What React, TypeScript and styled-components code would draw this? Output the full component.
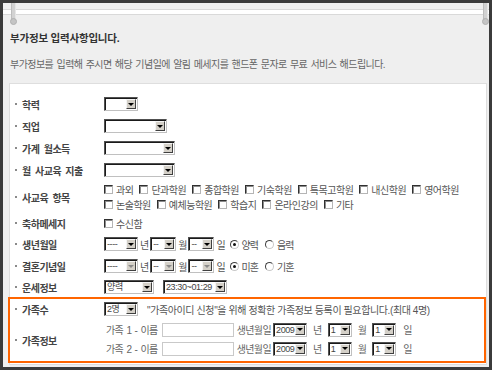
import React from 'react';
import styled, {createGlobalStyle} from 'styled-components';

const GlobalStyle = createGlobalStyle`
  html, body {
    margin: 0;
    padding: 0;
    background: #3b3b3b;
  }
  body {
    font-family: 'Liberation Sans', 'Noto Sans CJK KR', sans-serif;
  }
`;

const Frame = styled.div`
  width: 492px;
  height: 370px;
  box-sizing: border-box;
  padding: 3px;
  background: #3b3b3b;
`;

const Sheet = styled.div`
  position: relative;
  height: 100%;
  display: flex;
  flex-direction: column;
  background: #efefef;
`;

const TopStrip = styled.div`
  margin-top: 6px;
  height: 4px;
  background: #fff;
  border-top: 1px solid #d9d9d9;
  border-bottom: 1px solid #d9d9d9;
`;

const Pin = styled.span<{$left: number}>`
  position: absolute;
  top: 0;
  left: ${(p) => p.$left}px;
  width: 3px;
  height: 19px;
  background: #d2d2d2;
  border-left: 1px solid #bdbdbd;
  border-right: 1px solid #e6e6e6;

  &::after {
    content: '';
    position: absolute;
    left: -2px;
    bottom: -3px;
    width: 5px;
    height: 5px;
    border-radius: 50%;
    background: #c4c4c4;
    border: 1px solid #b0b0b0;
  }
`;

const Title = styled.div`
  margin: 17px 0 0 7px;
  font-size: 10.5px;
  line-height: 12px;
  font-weight: bold;
  letter-spacing: -0.2px;
  color: #333;
`;

const Description = styled.div`
  margin: 15px 0 0 7px;
  font-size: 10px;
  line-height: 12px;
  letter-spacing: -0.55px;
  word-spacing: 1px;
  color: #666;
`;

const Panel = styled.div`
  margin: 12px 2px 0 6px;
  padding-top: 9px;
  background: #fff;
  border: 1px solid #dedede;
`;

const Row = styled.div<{$h: number}>`
  display: flex;
  align-items: center;
  height: ${(p) => p.$h}px;
`;

const Label = styled.div`
  display: flex;
  align-items: center;
  flex: none;
  box-sizing: border-box;
  width: 94px;
  padding-left: 5px;
  font-size: 10px;
  font-weight: bold;
  letter-spacing: -0.5px;
  word-spacing: 2px;
  color: #444;

  &::before {
    content: '';
    width: 2px;
    height: 2px;
    margin-right: 5px;
    background: #8a8a8a;
  }
`;

const Fields = styled.div<{$gap?: number}>`
  display: flex;
  align-items: center;
  gap: ${(p) => p.$gap ?? 2}px;
  font-size: 10px;
  letter-spacing: -1px;
  color: #555;
`;

const Stack = styled.div`
  display: flex;
  flex-direction: column;
`;

const CheckLine = styled.div`
  display: flex;
  align-items: center;
  height: 15px;
  font-size: 10px;
  letter-spacing: -0.5px;
  color: #555;
`;

const CheckItem = styled.span`
  display: inline-flex;
  align-items: center;
  gap: 3px;
  margin-right: 6px;
  white-space: nowrap;
`;

const CheckBox = styled.span`
  flex: none;
  box-sizing: border-box;
  width: 9px;
  height: 9px;
  background: #fff;
  border: 1px solid #b5b5b5;
  border-top-color: #303030;
  border-left-color: #303030;
  box-shadow: inset 1px 1px 0 #8c8c8c;
`;

const RadioItem = styled.span`
  display: inline-flex;
  align-items: center;
  gap: 3px;
  margin-left: 3px;
  margin-right: 2px;
`;

const RadioDot = styled.span<{$on?: boolean}>`
  flex: none;
  box-sizing: border-box;
  width: 9px;
  height: 9px;
  border-radius: 50%;
  border: 1px solid #c8c8c8;
  border-top-color: #404040;
  border-left-color: #404040;
  background: #fff;
  display: flex;
  align-items: center;
  justify-content: center;

  &::after {
    content: '';
    width: 3px;
    height: 3px;
    border-radius: 50%;
    background: ${(p) => (p.$on ? '#111' : 'transparent')};
  }
`;

const SelectBox = styled.span<{$w: number}>`
  flex: none;
  display: inline-flex;
  align-items: stretch;
  box-sizing: border-box;
  width: ${(p) => p.$w}px;
  height: 14px;
  background: #fff;
  border: 1px solid #c0c0c0;
  border-top-color: #505050;
  border-left-color: #505050;
  box-shadow: inset 1px 1px 0 #1a1a1a;
`;

const SelectText = styled.span`
  flex: 1;
  min-width: 0;
  padding: 0 0 0 2px;
  overflow: hidden;
  font-family: 'Liberation Sans', 'Noto Sans CJK KR', sans-serif;
  font-size: 9px;
  line-height: 12px;
  letter-spacing: -0.4px;
  color: #444;
  white-space: nowrap;
`;

const SelectButton = styled.span<{$off?: boolean}>`
  flex: none;
  box-sizing: border-box;
  width: 10px;
  margin: 1px 1px 1px 0;
  background: #d4d0c8;
  border: 1px solid #404040;
  border-top-color: #f4f4f4;
  border-left-color: #f4f4f4;
  display: flex;
  align-items: center;
  justify-content: center;

  &::after {
    content: '';
    border-left: 3px solid transparent;
    border-right: 3px solid transparent;
    border-top: 3px solid ${(p) => (p.$off ? '#8a8a8a' : '#000')};
  }
`;

const Unit = styled.span<{$m?: number}>`
  margin: 0 ${(p) => p.$m ?? 0}px;
`;

const Notice = styled.span`
  margin-left: 7px;
  letter-spacing: -0.4px;
  color: #555;
  white-space: nowrap;
`;

const OrangeBox = styled.div`
  margin: 0 0 1px -2px;
  border: 2px solid #ff6500;
`;

const FamilyLines = styled.div`
  display: flex;
  flex-direction: column;
  padding: 1px 0 3px;
`;

const FamilyLine = styled.div`
  display: flex;
  align-items: center;
  height: 19px;
  padding-left: 2px;
  font-size: 10px;
  letter-spacing: -0.6px;
  word-spacing: 1px;
  color: #666;
  white-space: pre;
`;

const NameInput = styled.span`
  flex: none;
  box-sizing: border-box;
  width: 72px;
  height: 14px;
  margin: 0 3px 0 4px;
  background: #fff;
  border: 1px solid #c9c9c9;
`;

const BirthLabel = styled.span`
  margin-right: 2px;
`;

const Select = ({w, text, off}: {w: number; text: string; off?: boolean}) => (
  <SelectBox $w={w}>
    <SelectText>{text}</SelectText>
    <SelectButton $off={off} />
  </SelectBox>
);

const Check = ({label}: {label: string}) => (
  <CheckItem>
    <CheckBox />
    {label}
  </CheckItem>
);

const Radio = ({label, on}: {label: string; on?: boolean}) => (
  <RadioItem>
    <RadioDot $on={on} />
    {label}
  </RadioItem>
);

const DateFields = ({off, first, second}: {off?: boolean; first: string; second: string}) => (
  <Fields>
    <Select w={34} text="----" off={off} />
    <Unit>년</Unit>
    <Select w={26} text="--" off={off} />
    <Unit>월</Unit>
    <Select w={26} text="--" off={off} />
    <Unit>일</Unit>
    <Radio label={first} on />
    <Radio label={second} />
  </Fields>
);

const FamilyRow = ({index}: {index: number}) => (
  <FamilyLine>
    {`가족 ${index} - 이름`}
    <NameInput />
    <BirthLabel>생년월일</BirthLabel>
    <Select w={34} text="2009" />
    <Unit $m={6}>년</Unit>
    <Select w={24} text="1" />
    <Unit $m={6}>월</Unit>
    <Select w={24} text="1" />
    <Unit $m={7}>일</Unit>
  </FamilyLine>
);

const row1 = ['과외', '단과학원', '종합학원', '기숙학원', '특목고학원', '내신학원', '영어학원'];
const row2 = ['논술학원', '예체능학원', '학습지', '온라인강의', '기타'];

export default function App() {
  return (
    <Frame>
      <GlobalStyle />
      <Sheet>
        <Pin $left={8} />
        <Pin $left={480} />
        <TopStrip />
        <Title>부가정보 입력사항입니다.</Title>
        <Description>
          부가정보를 입력해 주시면 해당 기념일에 알림 메세지를 핸드폰 문자로 무료 서비스 해드립니다.
        </Description>

        <Panel>
          <Row $h={22}>
            <Label>학력</Label>
            <Select w={34} text="" />
          </Row>
          <Row $h={22}>
            <Label>직업</Label>
            <Select w={63} text="" />
          </Row>
          <Row $h={22}>
            <Label>가계 월소득</Label>
            <Select w={71} text="" />
          </Row>
          <Row $h={22}>
            <Label>월 사교육 지출</Label>
            <Select w={71} text="" />
          </Row>
          <Row $h={32}>
            <Label>사교육 항목</Label>
            <Stack>
              <CheckLine>
                {row1.map((item) => (
                  <Check key={item} label={item} />
                ))}
              </CheckLine>
              <CheckLine>
                {row2.map((item) => (
                  <Check key={item} label={item} />
                ))}
              </CheckLine>
            </Stack>
          </Row>
          <Row $h={20}>
            <Label>축하메세지</Label>
            <CheckLine>
              <Check label="수신함" />
            </CheckLine>
          </Row>
          <Row $h={22}>
            <Label>생년월일</Label>
            <DateFields first="양력" second="음력" />
          </Row>
          <Row $h={22}>
            <Label>결혼기념일</Label>
            <DateFields first="미혼" second="기혼" off />
          </Row>
          <Row $h={20}>
            <Label>운세정보</Label>
            <Fields $gap={9}>
              <Select w={50} text="양력" />
              <Select w={64} text="23:30~01:29" />
            </Fields>
          </Row>

          <OrangeBox>
            <Row $h={20}>
              <Label>가족수</Label>
              <Fields>
                <Select w={34} text="2명" />
                <Notice>"가족아이디 신청"을 위해 정확한 가족정보 등록이 필요합니다.(최대 4명)</Notice>
              </Fields>
            </Row>
            <Row $h={42}>
              <Label>가족정보</Label>
              <FamilyLines>
                <FamilyRow index={1} />
                <FamilyRow index={2} />
              </FamilyLines>
            </Row>
          </OrangeBox>
        </Panel>
      </Sheet>
    </Frame>
  );
}
